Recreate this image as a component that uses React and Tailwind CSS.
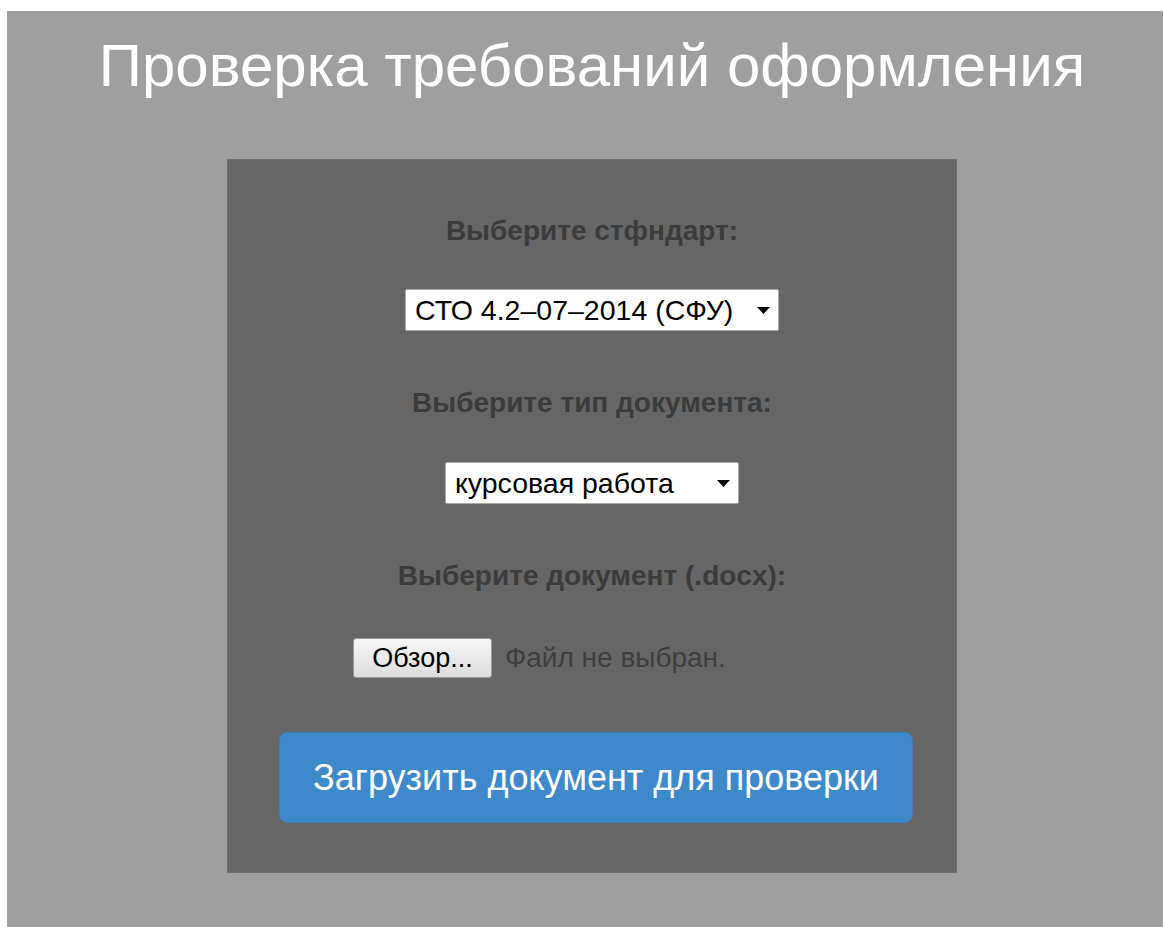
import React from "react";

function Caret() {
  return (
    <svg width="13" height="7" viewBox="0 0 13 7" className="shrink-0">
      <path d="M0 0 L13 0 L6.5 7 Z" fill="#000" />
    </svg>
  );
}

function FakeSelect({ value, width }) {
  return (
    <div
      className={`flex h-[42px] items-center justify-between rounded-[2px] border border-[#a9a9a9] bg-white pl-[9px] pr-[8px] text-[28.5px] leading-none text-black ${width}`}
    >
      <span>{value}</span>
      <Caret />
    </div>
  );
}

function Label({ children, className = "" }) {
  return (
    <div className={`text-center text-[28px] font-bold leading-[30px] text-[#3b3b3b] ${className}`}>
      {children}
    </div>
  );
}

export default function App() {
  return (
    <div
      className="min-h-[927px] bg-white pl-[7px] pt-[11px]"
      style={{ fontFamily: '"Liberation Sans", Arial, sans-serif' }}
    >
      <div className="h-[916px] w-[1156px] bg-[#9f9f9f]">
        <h1 className="pl-[14px] pt-[20px] text-center text-[60px] font-normal leading-[70px] text-white">
          Проверка требований оформления
        </h1>

        <div className="ml-[220px] mt-[58px] flex h-[714px] w-[730px] flex-col items-center border border-[#6f6f6f] bg-[#666666] pt-[56px]">
          <Label>Выберите стфндарт:</Label>
          <div className="mt-[43px]">
            <FakeSelect value="СТО 4.2–07–2014 (СФУ)" width="w-[374px]" />
          </div>

          <Label className="mt-[57px]">Выберите тип документа:</Label>
          <div className="mt-[44px]">
            <FakeSelect value="курсовая работа" width="w-[294px]" />
          </div>

          <Label className="mt-[57px]">Выберите документ (.docx):</Label>
          <div className="mt-[47px] flex w-[478px] items-center gap-[13px]">
            <button className="flex h-[40px] w-[139px] items-center justify-center rounded-[3px] border border-[#9c9c9c] bg-gradient-to-b from-[#f6f6f6] to-[#dddddd] text-[27px] leading-none text-black">
              Обзор...
            </button>
            <span className="text-[28px] leading-none text-[#3e3e3e]">Файл не выбран.</span>
          </div>

          <button className="ml-[51px] mt-[54px] flex h-[91px] w-[634px] items-center justify-center self-start rounded-[8px] border border-[#3a7fbd] bg-[#3e89c9] text-[36px] leading-none text-white">
            Загрузить документ для проверки
          </button>
        </div>
      </div>
    </div>
  );
}
